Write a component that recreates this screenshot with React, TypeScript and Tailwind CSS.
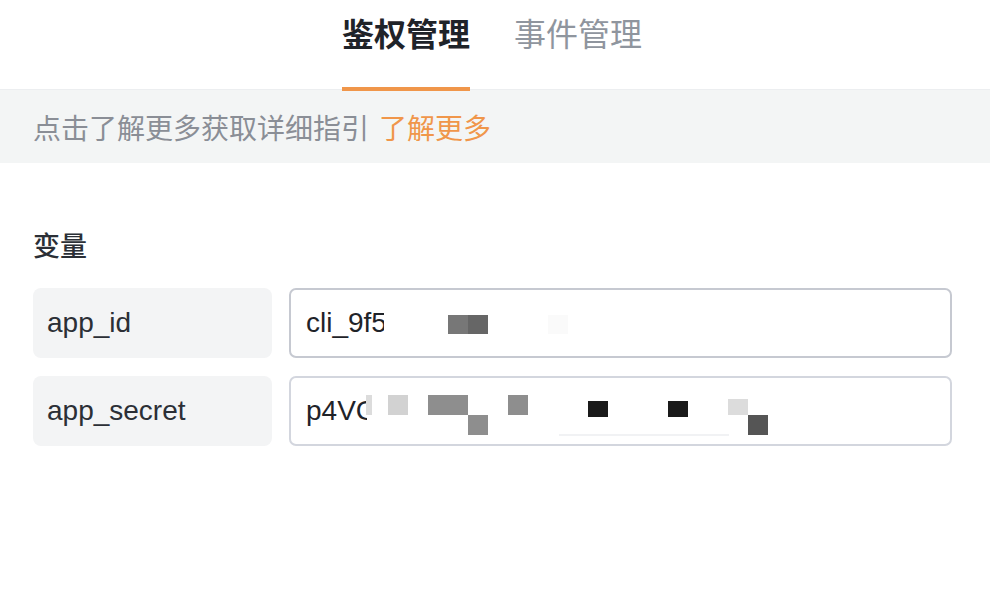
const font = { fontFamily: '"Liberation Sans", "Noto Sans CJK SC", sans-serif' };

interface Block {
  x: number;
  y: number;
  w: number;
  h: number;
  c: string;
}

// pixelated redaction blocks, offsets relative to the input box's padding edge
const idBlocks: Block[] = [
  { x: 157, y: 25, w: 20, h: 19, c: '#777777' },
  { x: 177, y: 25, w: 20, h: 19, c: '#666666' },
  { x: 257, y: 25, w: 20, h: 19, c: '#fafafa' },
];

const secretBlocks: Block[] = [
  { x: 75, y: 17, w: 6, h: 20, c: '#dcdcdc' },
  { x: 97, y: 17, w: 20, h: 20, c: '#d2d2d2' },
  { x: 137, y: 17, w: 40, h: 20, c: '#8e8e8e' },
  { x: 177, y: 37, w: 20, h: 20, c: '#8e8e8e' },
  { x: 217, y: 17, w: 20, h: 20, c: '#8e8e8e' },
  { x: 297, y: 23, w: 20, h: 16, c: '#1a1a1a' },
  { x: 377, y: 23, w: 20, h: 16, c: '#1a1a1a' },
  { x: 437, y: 21, w: 20, h: 16, c: '#dcdcdc' },
  { x: 457, y: 37, w: 20, h: 20, c: '#555555' },
  { x: 268, y: 56, w: 170, h: 2, c: '#f1f2f4' },
];

function Row({ label, value, clip, blocks, border }: { label: string; value: string; clip: number; blocks: Block[]; border: string }) {
  return (
    <div className="flex gap-[17px]">
      <div className="w-[239px] h-[70px] shrink-0 rounded-[8px] bg-[#f3f4f5] flex items-center px-[14px] text-[28px] text-[#2b2f36]">
        {label}
      </div>
      <div className={`relative flex-1 h-[70px] rounded-[7px] border-2 ${border} bg-white flex items-center px-[15px] text-[28px] text-[#1f2329]`}>
        <span className="overflow-hidden whitespace-nowrap" style={{ width: clip }}>{value}</span>
        {blocks.map((b, i) => (
          <span
            key={i}
            className="absolute"
            style={{ left: b.x, top: b.y, width: b.w, height: b.h, background: b.c }}
          />
        ))}
      </div>
    </div>
  );
}

export default function App() {
  return (
    <div className="w-[990px] h-[608px] bg-white overflow-hidden" style={font}>
      {/* Tabs */}
      <div className="h-[90px] flex justify-center gap-[44px] pr-[6px] border-b border-[#eceef0]">
        <div className="relative pt-[19px] text-[32px] leading-none font-bold text-[#1f2329]">
          鉴权管理
          <span className="absolute left-0 right-0 bottom-[-2px] h-[4px] bg-[#f0964a]" />
        </div>
        <div className="pt-[19px] text-[32px] leading-none text-[#8f959e]">事件管理</div>
      </div>

      {/* Hint band */}
      <div className="h-[73px] bg-[#f3f5f5] flex items-center pt-[6px] px-[33px] text-[28px] text-[#8a8e96]">
        点击了解更多获取详细指引
        <span className="ml-[10px] text-[#f0964a]">了解更多</span>
      </div>

      {/* Variables */}
      <div className="px-[33px] pt-[71px]">
        <div className="text-[27px] font-medium text-[#2b2f36] leading-none mb-[27px]">变量</div>
        <div className="flex flex-col gap-[18px] pr-[5px]">
          <Row label="app_id" value="cli_9f5" clip={78} blocks={idBlocks} border="border-[#c6c9d1]" />
          <Row label="app_secret" value="p4VC" clip={61} blocks={secretBlocks} border="border-[#d3d6de]" />
        </div>
      </div>
    </div>
  );
}
